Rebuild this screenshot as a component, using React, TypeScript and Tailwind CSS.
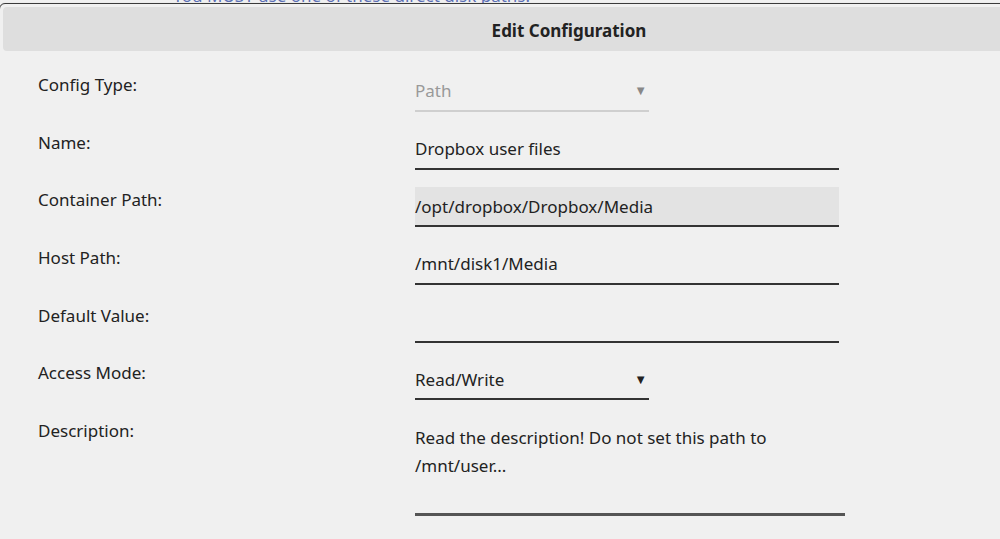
import React from "react";

function Label({ children }: { children: React.ReactNode }) {
  return (
    <div className="w-[412px] shrink-0 pl-[35px] pt-[1px] text-[17px] leading-[24px] text-[#222]">
      {children}
    </div>
  );
}

function Row({ label, children }: { label: string; children: React.ReactNode }) {
  return (
    <div className="flex">
      <Label>{label}</Label>
      {children}
    </div>
  );
}

export default function App() {
  return (
    <div className="w-[1000px] h-[539px] overflow-hidden bg-[#f0f0f0] text-[#222] font-['Noto_Sans',sans-serif]">
      <div className="h-[3px] overflow-hidden pl-[173px]">
        <div className="-mt-[16px] whitespace-nowrap text-[17px] leading-[24px] text-[#5b6fb5]">
          You MUST use one of these direct disk paths:
        </div>
      </div>
      <div className="-ml-[1px] w-[1139px] rounded-[6px] border border-[#3a3a3a] bg-[#f0f0f0] py-[2px] pt-[3px] pl-[3px] pr-[2px] shadow-[0_1px_2px_rgba(0,0,0,0.3)]">
        <div className="flex h-[44px] items-center justify-center rounded-[4px] bg-[#dedede] pt-[4px] text-[17px] font-bold text-[#222]">
          Edit Configuration
        </div>
        <div className="flex flex-col gap-[17.7px] pt-[21px] pb-[40px]">
          <Row label="Config Type:">
            <div className="flex h-[40px] w-[234px] items-center justify-between border-b-2 border-[#cfcfcf] text-[17px] text-[#999]">
              <span>Path</span>
              <span className="pr-[2px] text-[13px] text-[#888]">▼</span>
            </div>
          </Row>
          <Row label="Name:">
            <div className="flex h-[40px] w-[424px] items-center border-b-2 border-[#333] text-[17px]">
              Dropbox user files
            </div>
          </Row>
          <Row label="Container Path:">
            <div className="flex h-[40px] w-[424px] items-center border-b-2 border-[#333] bg-[#e3e3e3] text-[17px]">
              /opt/dropbox/Dropbox/Media
            </div>
          </Row>
          <Row label="Host Path:">
            <div className="flex h-[40px] w-[424px] items-center border-b-2 border-[#333] text-[17px]">
              /mnt/disk1/Media
            </div>
          </Row>
          <Row label="Default Value:">
            <div className="flex h-[40px] w-[424px] items-center border-b-2 border-[#333] text-[17px]"></div>
          </Row>
          <Row label="Access Mode:">
            <div className="flex h-[40px] w-[234px] items-center justify-between border-b-2 border-[#333] text-[17px]">
              <span>Read/Write</span>
              <span className="pr-[2px] text-[13px] text-[#222]">▼</span>
            </div>
          </Row>
          <Row label="Description:">
            <div className="h-[98px] w-[430px] border-b-[3px] border-[#555] pt-[6px] text-[17px] leading-[28px]">
              Read the description! Do not set this path to
              <br />
              /mnt/user...
            </div>
          </Row>
        </div>
      </div>
    </div>
  );
}
